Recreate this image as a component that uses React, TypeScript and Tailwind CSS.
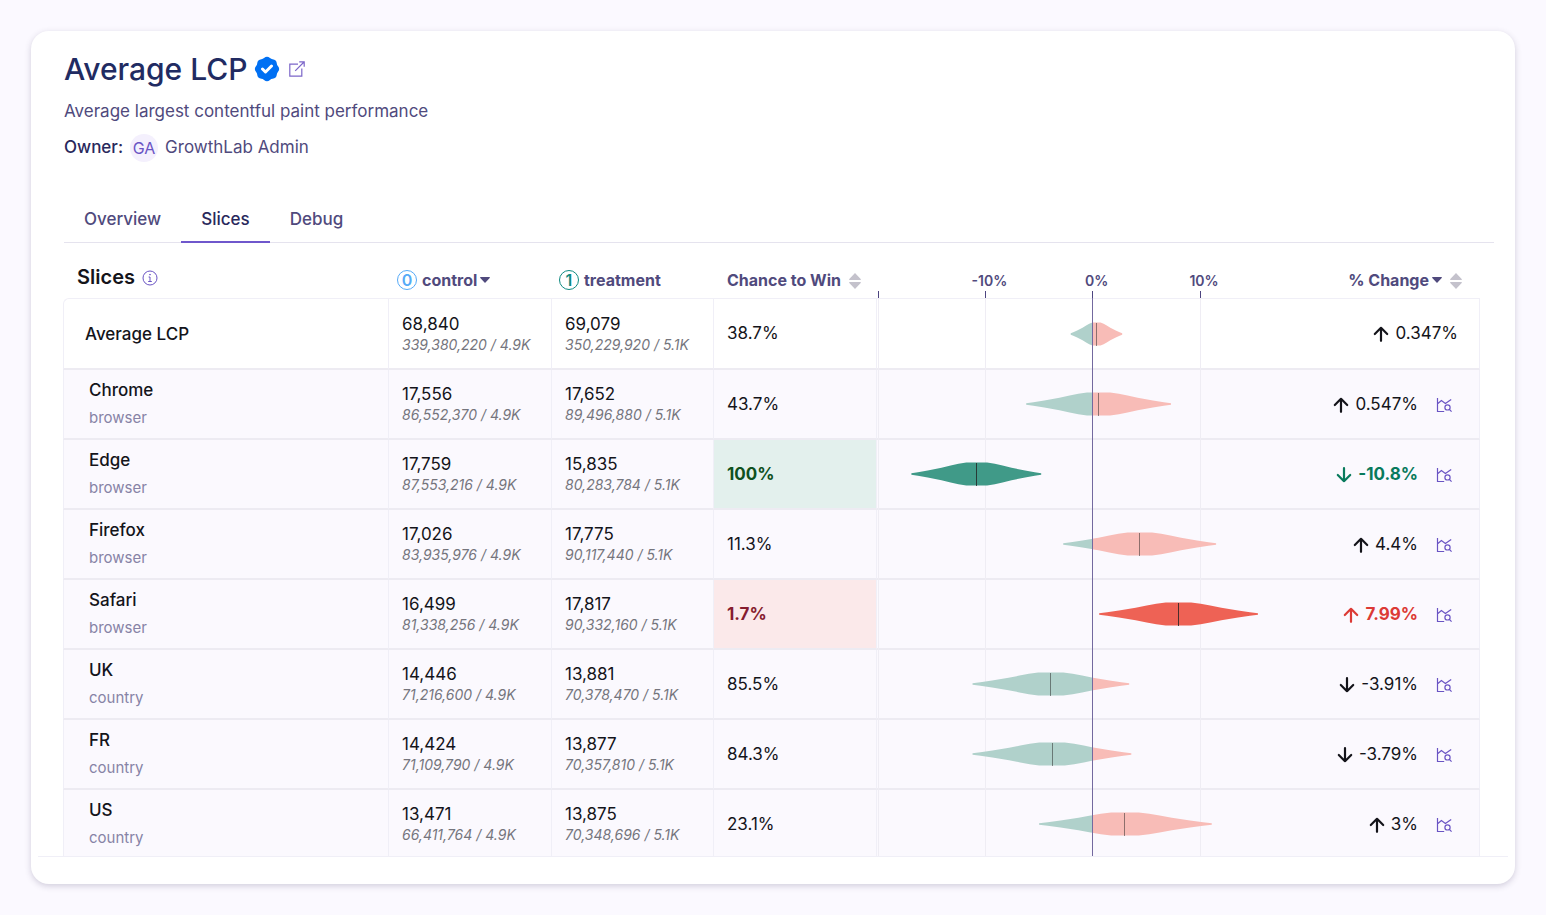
import React, { useState } from 'react';
import { HiBadgeCheck } from 'react-icons/hi';

type Slice = {
  name: string;
  kind?: string;
  control: [string, string];
  treatment: [string, string];
  win: string;
  status?: 'won' | 'lost';
  low: number;
  mean: number;
  high: number;
  change: string;
};

const slices: Slice[] = [
  { name: 'Average LCP', control: ['68,840', '339,380,220 / 4.9K'], treatment: ['69,079', '350,229,920 / 5.1K'], win: '38.7%', low: -2.05, mean: 0.347, high: 2.75, change: '0.347%' },
  { name: 'Chrome', kind: 'browser', control: ['17,556', '86,552,370 / 4.9K'], treatment: ['17,652', '89,496,880 / 5.1K'], win: '43.7%', low: -6.2, mean: 0.547, high: 7.3, change: '0.547%' },
  { name: 'Edge', kind: 'browser', control: ['17,759', '87,553,216 / 4.9K'], treatment: ['15,835', '80,283,784 / 5.1K'], win: '100%', status: 'won', low: -16.9, mean: -10.8, high: -4.8, change: '-10.8%' },
  { name: 'Firefox', kind: 'browser', control: ['17,026', '83,935,976 / 4.9K'], treatment: ['17,775', '90,117,440 / 5.1K'], win: '11.3%', low: -2.75, mean: 4.4, high: 11.5, change: '4.4%' },
  { name: 'Safari', kind: 'browser', control: ['16,499', '81,338,256 / 4.9K'], treatment: ['17,817', '90,332,160 / 5.1K'], win: '1.7%', status: 'lost', low: 0.6, mean: 7.99, high: 15.4, change: '7.99%' },
  { name: 'UK', kind: 'country', control: ['14,446', '71,216,600 / 4.9K'], treatment: ['13,881', '70,378,470 / 5.1K'], win: '85.5%', low: -11.2, mean: -3.91, high: 3.4, change: '-3.91%' },
  { name: 'FR', kind: 'country', control: ['14,424', '71,109,790 / 4.9K'], treatment: ['13,877', '70,357,810 / 5.1K'], win: '84.3%', low: -11.2, mean: -3.79, high: 3.6, change: '-3.79%' },
  { name: 'US', kind: 'country', control: ['13,471', '66,411,764 / 4.9K'], treatment: ['13,875', '70,348,696 / 5.1K'], win: '23.1%', low: -5, mean: 3, high: 11.1, change: '3%' },
];

const tabs = ['Overview', 'Slices', 'Debug'];

// the axis runs from -20% to 20%
const toX = (value: number) => 215.7 + value * 10.73;

// half height of a violin at a share of the way from the mean to its end
const profile: [number, number][] = [[0, 11.5], [0.16, 11.4], [0.28, 10.2], [0.4, 8.4], [0.54, 6.2], [0.75, 3.6], [0.9, 1.7], [1, 0.8]];

const violinPoints = (slice: Slice, y: number) => {
  const mean = toX(slice.mean);
  const left = mean - toX(slice.low);
  const right = toX(slice.high) - mean;
  const back = [...profile].reverse();
  return [
    ...back.map(([t, h]) => [mean - t * left, y - h]),
    ...profile.map(([t, h]) => [mean + t * right, y - h]),
    ...back.map(([t, h]) => [mean + t * right, y + h]),
    ...profile.map(([t, h]) => [mean - t * left, y + h]),
  ].map((p) => p.join(',')).join(' ');
};

const ExternalIcon = () => (
  <svg width="16" height="16" viewBox="0 0 16 16" fill="none" stroke="#7c66c9" strokeWidth="1.2">
    <path d="M9 3.2H.8v12h12V7.5M6.2 9.8 15 1M10.2.8h5v5" />
  </svg>
);

const InfoIcon = () => (
  <svg width="16" height="16" viewBox="0 0 16 16" fill="none" stroke="#6a54c4" strokeWidth="1">
    <circle cx="8" cy="8" r="7" />
    <path d="M6.6 7H8v4.4M6.2 11.5h3.6" />
    <circle cx="8" cy="4.7" r=".4" fill="#6a54c4" />
  </svg>
);

const Caret = () => (
  <svg width="10" height="6" viewBox="0 0 10 6" fill="currentColor">
    <path d="M.6 0h8.8c.5 0 .7.6.3 1L5.5 5.6a.7.7 0 0 1-1 0L.3 1C-.1.6.1 0 .6 0z" />
  </svg>
);

const ArrowIcon = ({ down }: { down: boolean }) => (
  <svg width="16" height="16" viewBox="0 0 16 16" fill="none" stroke="currentColor" strokeWidth="2.2" strokeLinecap="round" strokeLinejoin="round" className={down ? 'rotate-180' : ''}>
    <path d="M8 14.8V1.8M1.8 8 8 1.8 14.2 8" />
  </svg>
);

const ChartSearchIcon = () => (
  <svg width="16" height="16" viewBox="0 0 16 16" fill="none" stroke="#6a54c4" strokeWidth="1.2">
    <path d="M1.5 1v13.5h6.7M1.6 6.8 5.4 3.6l4 2.8 5.8-4" />
    <circle cx="11.5" cy="10.4" r="2.6" />
    <path d="m13.3 12.4 2.3 2.3" />
  </svg>
);

const AxisHeader = () => (
  <svg width="431" height="55" viewBox="0 0 431 55" className="block">
    {[-20, -10, 0, 10].map((value) => (
      <g key={value}>
        <rect x={Math.floor(toX(value))} y="48" width="1" height="7" fill="#4d4580" />
        {value > -20 && (
          <text x={toX(value) + 4} y="43" textAnchor="middle" className="fill-[#504a7d] text-sm font-semibold">
            {value}%
          </text>
        )}
      </g>
    ))}
  </svg>
);

const Violin = ({ slice, index }: { slice: Slice; index: number }) => {
  const height = index === 0 ? 72 : 70;
  const y = index === 0 ? 36 : 34;
  const points = violinPoints(slice, y);
  return (
    <svg width="431" height={height} viewBox={`0 0 431 ${height}`} className="block">
      <defs>
        <clipPath id={`better-${index}`}>
          <rect x="0" y="0" width="215.5" height="72" />
        </clipPath>
        <clipPath id={`worse-${index}`}>
          <rect x="215.5" y="0" width="215.5" height="72" />
        </clipPath>
      </defs>
      {index === 0 && <rect x="0" y="0" width="431" height="1" fill="#f0eff7" />}
      <rect x="0" y={height - 2} width="431" height="2" fill="#edebf2" />
      {[-20, -10, 10].map((value) => (
        <rect key={value} x={Math.floor(toX(value))} y="0" width="1" height={height} fill="#efedf4" />
      ))}
      <polygon points={points} clipPath={`url(#better-${index})`} fill={slice.status ? '#409a88' : '#b0d1cb'} />
      <polygon points={points} clipPath={`url(#worse-${index})`} fill={slice.status ? '#ee6255' : '#f8bcb7'} />
      <rect x={Math.floor(toX(slice.mean))} y={y - 11} width="1" height="23" fill="#222222" opacity={slice.status ? 0.8 : 0.5} />
      <rect x="215" y="0" width="1" height={height} fill="#73699f" />
    </svg>
  );
};

const SortButton = ({ label }: { label: string }) => (
  <button aria-label={label} className="pt-[2px] text-[#c4c2cc]">
    <svg width="12" height="16" viewBox="0 0 12 16" fill="currentColor" className="block">
      <path d="M6 0 11.7 6a.5.5 0 0 1-.4.9H.7a.5.5 0 0 1-.4-.9zM6 16 11.7 10a.5.5 0 0 0-.4-.9H.7a.5.5 0 0 0-.4.9z" />
    </svg>
  </button>
);

const App: React.FC = () => {
  const [activeTab, setActiveTab] = useState('Slices');

  return (
    <div className="min-h-screen bg-[#fbf9ff] p-[31px] font-['Inter',sans-serif] text-[17px] text-[#14141a]">
      <div className="rounded-[18px] bg-white pb-[27px] shadow-[0_2px_6px_rgba(60,50,90,0.22)]">
        <header className="pl-[33px] pr-[21px] pt-[18px]">
          <div className="flex items-center">
            <h1 className="text-[30px] leading-[40px] font-medium text-[#212b62]">Average LCP</h1>
            <HiBadgeCheck size={30} className="ml-1 text-[#0070f3]" />
            <a href="#metric" aria-label="Open metric" className="ml-[7px]">
              <ExternalIcon />
            </a>
          </div>
          <p className="mt-[9px] leading-[26px] text-[#504a7d]">Average largest contentful paint performance</p>
          <div className="mt-[10px] flex items-center gap-[7px]">
            <span className="font-medium text-[#29285c]">Owner:</span>
            <span className="flex h-7 w-7 items-center justify-center rounded-full bg-[#f4f0fd] text-base text-[#6a54c4]">GA</span>
            <span className="text-[#504a7d]">GrowthLab Admin</span>
          </div>
          <nav className="mt-[33px] flex border-b border-[#e5e3ee]">
            {tabs.map((tab) => (
              <button
                key={tab}
                onClick={() => setActiveTab(tab)}
                className={
                  tab === activeTab
                    ? '-mb-px border-b-2 border-[#6f57cc] px-5 pt-3 pb-2 font-medium text-[#29285c]'
                    : '-mb-px border-b-2 border-transparent px-5 pt-3 pb-2 font-medium text-[#504a7d]'
                }
              >
                {tab}
              </button>
            ))}
          </nav>
        </header>

        <div className="mx-[7px] h-[614px] overflow-hidden border-b border-[#f0eff7] pl-[25px] pr-[28px]">
          <table className="w-full table-fixed border-separate border-spacing-0 text-left">
            <colgroup>
              <col />
              <col className="w-[163px]" />
              <col className="w-[162px]" />
              <col className="w-[164px]" />
              <col className="w-[431px]" />
              <col className="w-[172px]" />
            </colgroup>
            <thead>
              <tr className="h-[55px] text-base font-bold text-[#504a7d]">
                <th className="p-0 pl-[14px]">
                  <div className="flex items-center pt-[14px]">
                    <span className="text-xl font-semibold text-[#14141a]">Slices</span>
                    <button aria-label="About slices" className="mt-[2px] ml-[7px]">
                      <InfoIcon />
                    </button>
                  </div>
                </th>
                <th className="p-0 pl-[9px]">
                  <button className="flex items-center pt-5 font-bold">
                    <span className="mr-[5px] flex h-5 w-5 items-center justify-center rounded-full border border-[#56aaf7] font-semibold text-[#56aaf7]">0</span>
                    control
                    <span className="ml-[3px]"><Caret /></span>
                  </button>
                </th>
                <th className="p-0 pl-2">
                  <div className="flex items-center pt-5">
                    <span className="mr-[5px] flex h-5 w-5 items-center justify-center rounded-full border border-[#0f8a80] font-semibold text-[#0f8a80]">1</span>
                    treatment
                  </div>
                </th>
                <th className="p-0 pl-[14px]">
                  <div className="flex items-center gap-2 pt-5 whitespace-nowrap">
                    Chance to Win
                    <SortButton label="Sort by chance to win" />
                  </div>
                </th>
                <th className="p-0">
                  <AxisHeader />
                </th>
                <th className="p-0 pr-[18px]">
                  <div className="flex items-center justify-end gap-2 pt-5 whitespace-nowrap">
                    <button className="flex items-center gap-[3px] font-bold">
                      % Change <Caret />
                    </button>
                    <SortButton label="Sort by change" />
                  </div>
                </th>
              </tr>
            </thead>
            <tbody>
              {slices.map((slice, index) => {
                const total = index === 0;
                const line = total ? 'border-t border-b-2 border-t-[#f0eff7] border-b-[#edebf2]' : 'border-b-2 border-b-[#edebf2]';
                return (
                  <tr key={slice.name} className={total ? 'h-[72px] bg-white' : 'h-[70px] bg-[#fbf9fe]'}>
                    <td className={`border-l border-l-[#f0eff7] p-0 pt-px ${line} ${total ? 'rounded-tl-md pl-[21px]' : 'pl-[25px]'}`}>
                      <div className="leading-7 font-medium">{slice.name}</div>
                      {slice.kind && <div className="text-[15px] leading-7 text-[#8783a6]">{slice.kind}</div>}
                    </td>
                    {[slice.control, slice.treatment].map(([value, detail]) => (
                      <td key={detail} className={`border-l border-l-[#f0eff7] p-0 pt-px pl-[13px] whitespace-nowrap ${line}`}>
                        <div className="leading-[22px]">{value}</div>
                        <div className="text-sm leading-5 text-[#75757d] italic">{detail}</div>
                      </td>
                    ))}
                    <td
                      className={`border-x border-x-[#f0eff7] p-0 pt-[2px] pl-[13px] ${line} ${
                        slice.status === 'won' ? 'bg-[#e3f0ed] font-bold text-[#0f511e]' : ''
                      } ${slice.status === 'lost' ? 'bg-[#fbe9ea] font-bold text-[#861c2f]' : ''}`}
                    >
                      {slice.win}
                    </td>
                    <td className="p-0">
                      <Violin slice={slice} index={index} />
                    </td>
                    <td className={`border-r border-r-[#f0eff7] p-0 pt-[2px] ${line} ${total ? 'pr-[21px]' : 'pr-[27px]'}`}>
                      <div
                        className={`flex items-center justify-end gap-[6px] ${slice.status === 'won' ? 'font-bold text-[#087a5c]' : ''} ${
                          slice.status === 'lost' ? 'font-bold text-[#dc3a35]' : ''
                        }`}
                      >
                        <ArrowIcon down={slice.change.startsWith('-')} />
                        {slice.change}
                        {!total && (
                          <a href="#explore" aria-label={`Explore ${slice.name}`} className="ml-3">
                            <ChartSearchIcon />
                          </a>
                        )}
                      </div>
                    </td>
                  </tr>
                );
              })}
            </tbody>
          </table>
        </div>
      </div>
    </div>
  );
};

export default App;
